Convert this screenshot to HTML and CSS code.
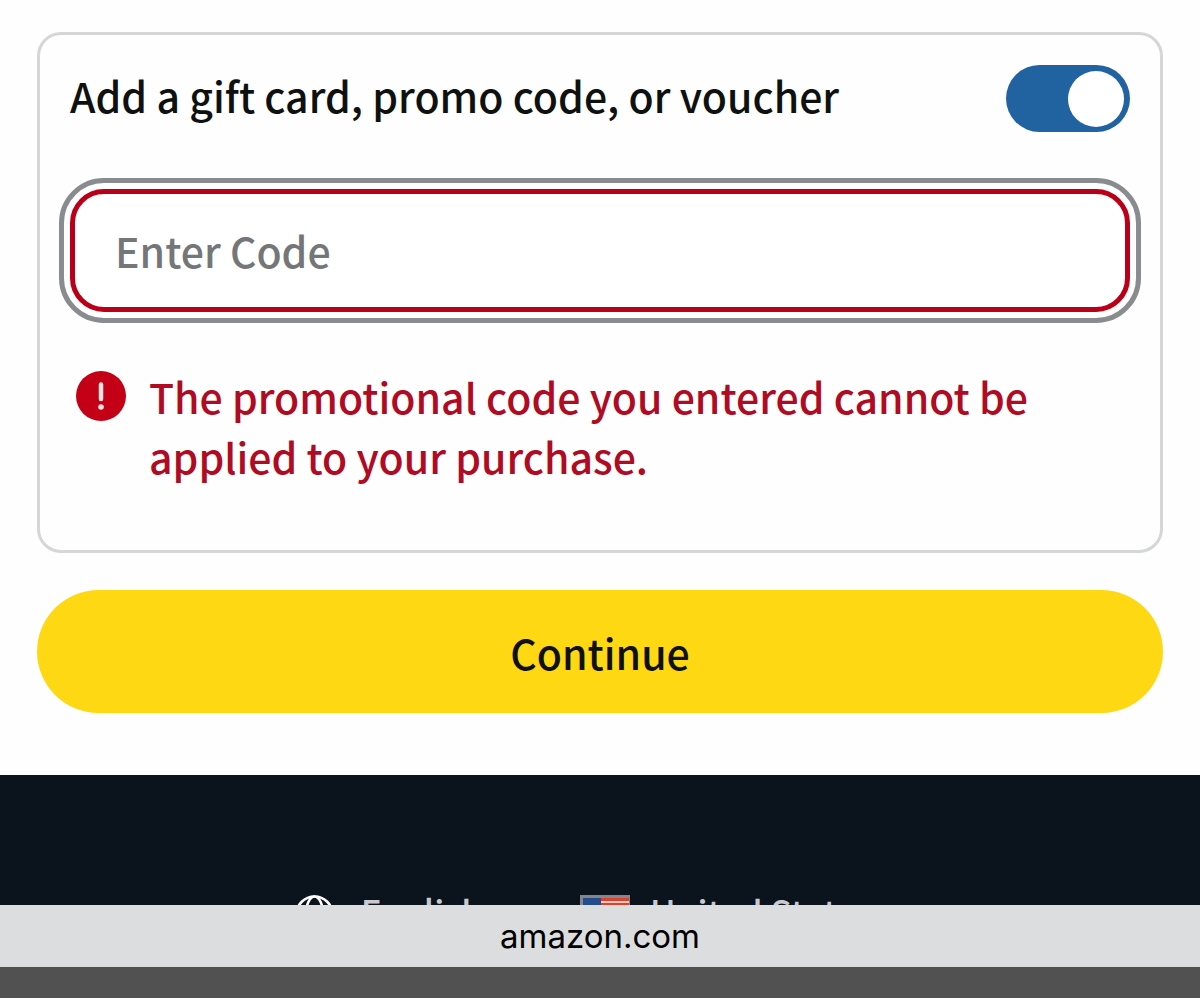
FILE: index.html
```html
<!DOCTYPE html>
<html lang="en">
<head>
<meta charset="utf-8">
<meta name="viewport" content="width=device-width, initial-scale=1">
<title>Checkout</title>
<link rel="stylesheet" href="styles.css">
</head>
<body>
<main class="checkout">
  <section class="card">
    <div class="card-head">
      <label class="card-title" for="use-code">Add a gift card, promo code, or voucher</label>
      <input class="switch" id="use-code" type="checkbox" role="switch" checked>
    </div>
    <input class="code-input" type="text" placeholder="Enter Code" aria-label="Enter Code" aria-invalid="true" aria-describedby="code-error">
    <div class="alert" role="alert">
      <svg class="alert-icon" viewBox="0 0 50 50" aria-hidden="true">
        <circle cx="25" cy="25" r="25" fill="#c40016"/>
        <path d="M25 13.500v14.500" stroke="#f7e4e3" stroke-width="4.500" stroke-linecap="round"/>
        <circle cx="25" cy="36" r="2.800" fill="#f7e4e3"/>
      </svg>
      <p class="alert-text" id="code-error">The promotional code you entered cannot be applied to your purchase.</p>
    </div>
  </section>
  <button class="continue" type="button">Continue</button>
</main>
<footer class="footer">
  <a class="footer-link" href="#language">
    <svg class="globe" viewBox="0 0 39 39" fill="none" stroke="#fff" stroke-width="2.600" aria-hidden="true">
      <circle cx="19.500" cy="19.500" r="18"/>
      <ellipse cx="19.500" cy="19.500" rx="8.500" ry="18"/>
      <path d="M2 19.500h35M4 12.500h31M4 26.500h31"/>
    </svg>
    <span>English</span>
  </a>
  <a class="footer-link" href="#country">
    <svg class="flag" viewBox="0 0 50 34" aria-hidden="true">
      <rect width="50" height="34" fill="#85868d"/>
      <rect x="3" y="3" width="46" height="28" fill="#d8432f"/>
      <path d="M3 7h46M3 13h46M3 19h46M3 25h46" stroke="#f3c9c0" stroke-width="2"/>
      <rect x="3" y="3" width="18" height="15" fill="#244b8c"/>
    </svg>
    <span>United States</span>
  </a>
</footer>
<div class="browser-bar">
  <div class="address">amazon.com</div>
</div>
</body>
</html>
```
FILE: styles.css
```css
* {
  box-sizing: border-box;
}

body {
  display: flex;
  flex-direction: column;
  height: 100vh;
  margin: 0;
  overflow: hidden;
  background: #fefefe;
  color: #0f1111;
  font-family: "Noto Sans CJK SC", "Noto Sans", sans-serif;
  font-size: 41px;
  font-weight: 500;
  line-height: 60px;
}

.checkout {
  display: flex;
  flex-direction: column;
  flex: none;
  gap: 37px;
  padding: 32px 37px 62px;
}

.card {
  padding: 30px 30px 64px;
  border: 3px solid #d5d6d7;
  border-radius: 24px;
}

.card-head {
  display: flex;
  align-items: flex-start;
  justify-content: space-between;
  gap: 24px;
}

.switch {
  flex: none;
  display: flex;
  align-items: center;
  justify-content: flex-end;
  width: 124px;
  height: 67px;
  margin: 0;
  padding: 0 6px;
  border-radius: 34px;
  background: #2162a1;
  appearance: none;
}

.switch::before {
  content: "";
  width: 56px;
  height: 56px;
  border-radius: 50%;
  background: #fff;
}

.switch:not(:checked) {
  justify-content: flex-start;
  background: #888c8c;
}

.code-input {
  display: block;
  width: 100%;
  height: 123px;
  margin: 57px 0 54px;
  padding: 0 40px 2px;
  border: 5px solid #ba0018;
  border-radius: 34px;
  outline: 5px solid #888c8e;
  outline-offset: 6px;
  background: #fff;
  color: inherit;
  font: inherit;
}

.code-input::placeholder {
  color: #747678;
  opacity: 1;
}

.alert {
  display: flex;
  align-items: flex-start;
  gap: 23px;
  padding: 0 6px;
}

.alert-icon {
  flex: none;
  width: 50px;
  height: 50px;
  margin-top: 5px;
}

.alert-text {
  margin: 0;
  color: #b00b22;
}

.continue {
  width: 100%;
  height: 123px;
  padding: 0;
  border: 0;
  border-radius: 62px;
  background: #ffd814;
  color: inherit;
  font: inherit;
}

.footer {
  display: flex;
  flex: 1;
  align-items: flex-start;
  justify-content: center;
  gap: 97px;
  min-height: 0;
  padding: 120px 32px 0 0;
  overflow: hidden;
  background: #0b131d;
}

.footer-link {
  display: flex;
  gap: 27px;
  color: #c8cacf;
  font-size: 35px;
  line-height: 32px;
  text-decoration: none;
}

.footer-link + .footer-link {
  gap: 20px;
}

.globe {
  width: 39px;
  height: 39px;
}

.flag {
  width: 50px;
  height: 34px;
}

.browser-bar {
  flex: none;
  padding-bottom: 31px;
  background: #515152;
}

.address {
  height: 62px;
  background: #dcdddf;
  color: #000;
  font-family: Inter, "Liberation Sans", sans-serif;
  font-size: 33px;
  font-weight: 400;
  line-height: 62px;
  text-align: center;
}
```
